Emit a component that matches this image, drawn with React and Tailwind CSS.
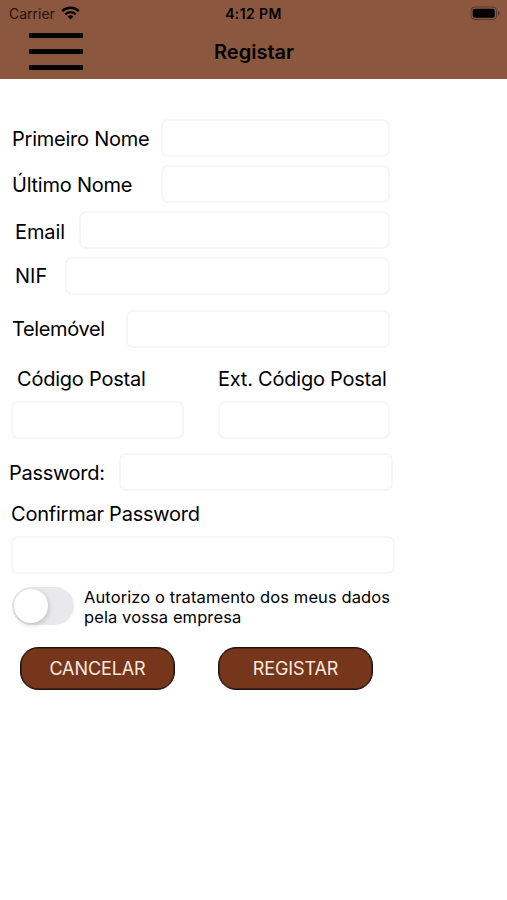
import { useState } from 'react';

const inputClass = 'h-[38px] rounded-[7px] border-2 border-[#f6f6f6] bg-white px-2 text-lg outline-none';
const buttonClass =
  'h-[43px] w-[155px] rounded-[18px] border border-[#1c1310] bg-[#76361b] shadow-[inset_0_0_0_0.5px_#1c1310]';

function StatusBar() {
  return (
    <div className="grid h-7 grid-cols-3 items-center pl-[9px] pr-[7px] text-[14px] leading-none">
      <div className="flex items-center gap-[6px]">
        <span className="text-black/80">Carrier</span>
        <svg className="-mt-[2px]" width="19" height="14" viewBox="0 0 19 14" fill="none" stroke="#000" strokeWidth="2.4">
          <path d="M1.2 5.2a11.8 11.8 0 0 1 16.600 0" />
          <path d="M4.2 8.3a7.5 7.5 0 0 1 10.600 0" />
          <path d="M9.5 13.500 6.600 10.600a4.100 4.100 0 0 1 5.800 0Z" fill="#000" stroke="none" />
        </svg>
      </div>
      <span className="-ml-[2px] text-center font-semibold tracking-[0.4px]">4:12 PM</span>
      <svg className="-mt-px justify-self-end" width="30" height="15" viewBox="0 0 30 15">
        <rect x="1" y="1" width="25.5" height="12.5" rx="3.5" fill="none" stroke="#000" strokeOpacity="0.35" />
        <rect x="2.7" y="2.7" width="22" height="9" rx="2" fill="#000" />
        <path d="M28 5v4.500c1-.3 1.500-1.100 1.500-2.200S29 5.300 28 5Z" fill="#000" fillOpacity="0.4" />
      </svg>
    </div>
  );
}

export default function App() {
  const [authorized, setAuthorized] = useState(false);

  return (
    <div className="h-[900px] w-full overflow-hidden bg-white font-['Inter','Liberation_Sans',sans-serif] text-black">
      <header className="h-[79px] bg-[#8b573f]">
        <StatusBar />
        <div className="grid h-[47px] grid-cols-[83px_1fr_83px] items-center">
          <button type="button" aria-label="Menu" className="flex flex-col gap-[11px] pl-[29px]">
            <span className="h-[5px] w-[54px] rounded-[1px] bg-black" />
            <span className="h-[5px] w-[54px] rounded-[1px] bg-black" />
            <span className="h-[5px] w-[54px] rounded-[1px] bg-black" />
          </button>
          <h1 className="pl-px pt-px text-center text-[20px] font-semibold">Registar</h1>
        </div>
      </header>

      <form className="w-[396px] pt-10 text-[20px] leading-6 tracking-[-0.23px]" onSubmit={(e) => e.preventDefault()}>
        <div className="flex flex-col gap-2 pr-[6px]">
          <div className="flex items-center">
            <label htmlFor="firstName" className="w-[161px] shrink-0 pl-3 pt-[2px]">Primeiro Nome</label>
            <input id="firstName" className={`${inputClass} min-w-0 flex-1`} />
          </div>
          <div className="flex items-center">
            <label htmlFor="lastName" className="w-[161px] shrink-0 pl-3 pt-[2px]">Último Nome</label>
            <input id="lastName" className={`${inputClass} min-w-0 flex-1`} />
          </div>
          <div className="flex items-center">
            <label htmlFor="email" className="w-[79px] shrink-0 pl-[15px] pt-1 tracking-[-0.1px]">Email</label>
            <input id="email" className={`${inputClass} min-w-0 flex-1`} />
          </div>
          <div className="flex items-center">
            <label htmlFor="nif" className="w-[65px] shrink-0 pl-[15px] tracking-normal">NIF</label>
            <input id="nif" className={`${inputClass} min-w-0 flex-1`} />
          </div>
        </div>

        <div className="mt-[15px] flex items-center pr-[6px]">
          <label htmlFor="phone" className="w-[126px] shrink-0 pl-3 tracking-[-0.35px]">Telemóvel</label>
          <input id="phone" className={`${inputClass} min-w-0 flex-1`} />
        </div>

        <div className="mt-[19px] flex gap-[34px] pl-[11px]">
          <div className="flex w-[173px] flex-col gap-[10px]">
            <label htmlFor="postal" className="whitespace-nowrap pl-[6px]">Código Postal</label>
            <input id="postal" className={`${inputClass} w-full`} />
          </div>
          <div className="flex w-[172px] flex-col gap-[10px]">
            <label htmlFor="postalExt" className="whitespace-nowrap">Ext. Código Postal</label>
            <input id="postalExt" className={`${inputClass} w-full`} />
          </div>
        </div>

        <div className="mt-[14px] flex items-center pr-[3px]">
          <label htmlFor="password" className="w-[119px] shrink-0 pl-[9px] pt-[2px] tracking-[-0.3px]">Password:</label>
          <input id="password" type="password" className={`${inputClass} min-w-0 flex-1`} />
        </div>

        <div className="mt-[10px] flex flex-col gap-[10px] pl-[11px]">
          <label htmlFor="confirm" className="pt-px">Confirmar Password</label>
          <input id="confirm" type="password" className={`${inputClass} w-[384px]`} />
        </div>

        <div className="mt-[13px] flex pl-3">
          <button
            type="button"
            role="switch"
            aria-checked={authorized}
            aria-label="Autorizo"
            onClick={() => setAuthorized(!authorized)}
            className={`flex h-[38px] w-[62px] shrink-0 items-center rounded-full p-[2px] ${
              authorized ? 'justify-end bg-green-500' : 'bg-[#e9e9eb]'
            }`}
          >
            <span className="size-[34px] rounded-full bg-white shadow-[1px_2px_5px_rgba(0,0,0,0.18)]" />
          </button>
          <p className="whitespace-nowrap pl-[10px] text-[16.5px] leading-[20px] tracking-[0.1px]">
            Autorizo o tratamento dos meus dados
            <br />
            pela vossa empresa
          </p>
        </div>

        <div className="mt-[20px] flex gap-[43px] pl-5 text-[18px] tracking-[-0.1px] text-[#fbe9df]">
          <button type="button" className={buttonClass}>
            CANCELAR
          </button>
          <button type="submit" className={buttonClass}>
            REGISTAR
          </button>
        </div>
      </form>
    </div>
  );
}
